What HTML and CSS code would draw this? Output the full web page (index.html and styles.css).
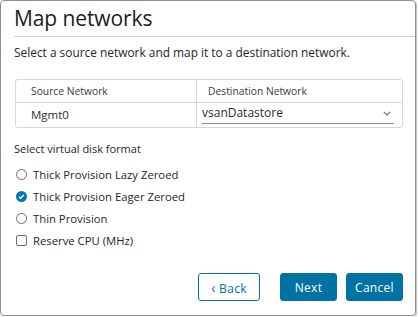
FILE: index.html
```html
<!DOCTYPE html>
<html>
<head>
<meta charset="utf-8">
<link rel="stylesheet" href="styles.css">
</head>
<body>
<div class="dialog">
  <div class="header"><h1 class="title">Map networks</h1></div>
  <div class="body">
    <p class="intro">Select a source network and map it to a destination network.</p>
    <div class="grid">
      <div class="row head">
        <div class="cell c1">Source Network</div>
        <div class="cell c2">Destination Network</div>
      </div>
      <div class="row data">
        <div class="cell c1">Mgmt0</div>
        <div class="cell c2">
          <div class="select">
            <span>vsanDatastore</span>
            <svg class="chev" width="8" height="5" viewBox="0 0 8 5"><path d="M0.8 0.8l3.2 3.2 3.2-3.2" fill="none" stroke="#666" stroke-width="1.1"/></svg>
          </div>
        </div>
      </div>
    </div>
    <p class="section">Select virtual disk format</p>
    <div class="options">
      <label class="opt"><span class="radio"></span>Thick Provision Lazy Zeroed</label>
      <label class="opt"><span class="radio on"><svg width="11" height="11" viewBox="0 0 11 11"><circle cx="5.5" cy="5.5" r="5.5" fill="#0079b8"/><path d="M3.1 5.7l1.6 1.6 3.1-3.3" fill="none" stroke="#fff" stroke-width="1.4"/></svg></span>Thick Provision Eager Zeroed</label>
      <label class="opt"><span class="radio"></span>Thin Provision</label>
      <label class="opt chk"><span class="box"></span>Reserve CPU (MHz)</label>
    </div>
  </div>
  <div class="footer">
    <button class="btn outline"><span class="lt">‹</span> Back</button>
    <button class="btn primary">Next</button>
    <button class="btn primary">Cancel</button>
  </div>
</div>
</body>
</html>
```
FILE: styles.css
```css
html, body { margin: 0; padding: 0; background: #fff; }
body { font-family: "Open Sans", "Liberation Sans", sans-serif; color: #313131; }
.dialog {
  width: 414px; height: 314px;
  border: 1px solid #8e8e8e;
  border-radius: 4px;
  box-shadow: 1px 1px 1px rgba(0,0,0,0.25);
  display: flex; flex-direction: column;
}
.header { margin-left: 13px; border-bottom: 1px solid #cfcfcf; height: 36px; box-sizing: border-box; padding-top: 4px; }
.title { margin: 0; font-weight: 400; font-size: 21px; line-height: 26px; color: #1b1b1b; letter-spacing: -0.1px; }
.body { padding: 0 13px; flex: 1; }
.intro { margin: 7px 0 0; font-size: 11.9px; line-height: 16px; color: #262626; }
.grid { margin: 19px 0 0 1px; border: 1px solid #d7d7d7; border-radius: 3px; width: 386px; }
.row { display: flex; }
.head { height: 22px; }
.data { border-top: 1px solid #d7d7d7; height: 24px; }
.cell { font-size: 11.5px; line-height: 24px; color: #2b2b2b; }
.head .cell { font-size: 10.3px; line-height: 22px; color: #3a3a3a; }
.c1 { padding-left: 15px; border-right: 1px solid #d7d7d7; box-sizing: border-box; width: 181px; }
.c2 { flex: 1; padding-left: 11px; }
.data .c2 { padding-left: 5px; padding-right: 8px; }
.select { display: flex; align-items: center; justify-content: space-between; border-bottom: 1px solid #8c8c8c; height: 20px; font-size: 12px; line-height: 20px; }
.chev { margin-right: 3px; }
.section { margin: 13px 0 0; font-size: 11px; line-height: 16px; color: #262626; }
.options { margin-top: 6px; display: flex; flex-direction: column; }
.opt { display: flex; align-items: center; height: 22px; font-size: 11.3px; color: #262626; }
.radio { width: 9px; height: 9px; border: 1px solid #6c6c6c; border-radius: 50%; margin: 0 6px 0 2px; display: inline-flex; }
.radio.on { border: none; width: 11px; height: 11px; }
.box { width: 9px; height: 9px; border: 1px solid #6c6c6c; border-radius: 2px; margin: 0 6px 0 2px; }
.footer { display: flex; justify-content: flex-end; gap: 9px; padding: 0 12px 14px 0; }
.btn { height: 28px; font-family: inherit; font-size: 12px; border-radius: 3px; padding: 0; cursor: pointer; letter-spacing: 0.3px; }
.outline { width: 62px; background: #fff; border: 1px solid #0072a3; color: #0072a3; margin-right: 11px; }
.primary { width: 57px; background: #0072a3; border: 1px solid #0072a3; color: #fff; }
.lt { font-size: 14px; }
```
